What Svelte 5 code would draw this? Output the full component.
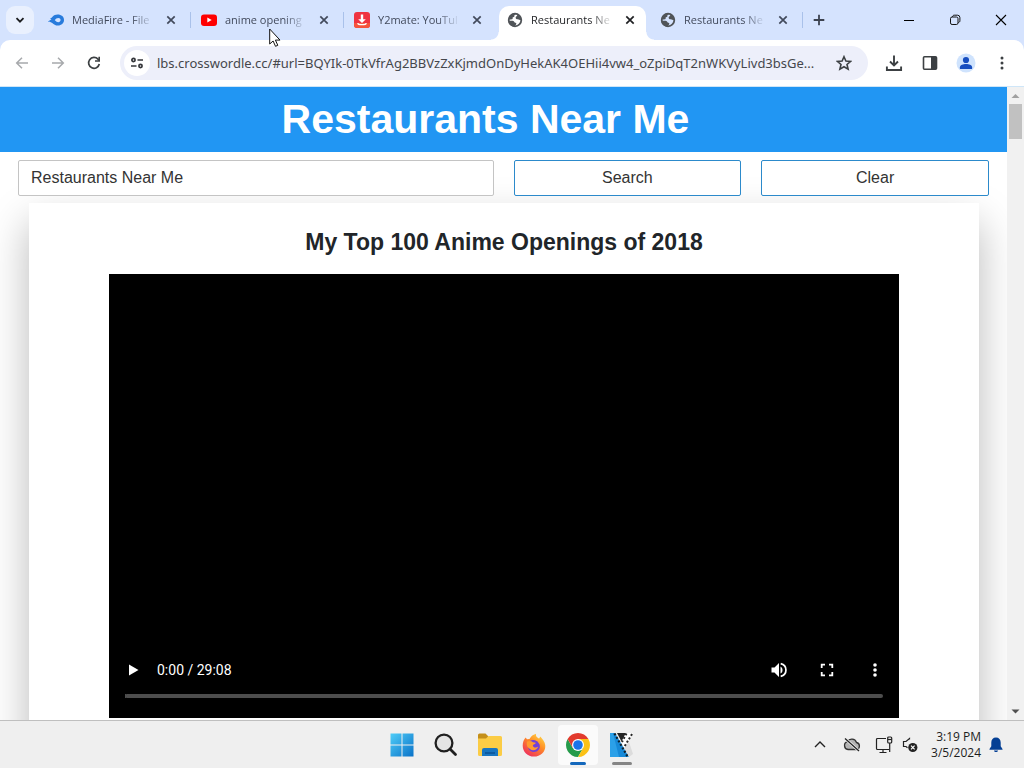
<script>
  const tabs = [
    { title: 'MediaFire - File', icon: 'mediafire' },
    { title: 'anime opening', icon: 'youtube' },
    { title: 'Y2mate: YouTul', icon: 'y2mate' },
    { title: 'Restaurants Ne', icon: 'globe', active: true },
    { title: 'Restaurants Ne', icon: 'globe' }
  ];
  const apps = ['Start', 'Search', 'File Explorer', 'Firefox', 'Chrome', 'Video Editor'];
  let query = $state('Restaurants Near Me');
  let position = $state(0);
</script>

<div class="screen">
  <nav class="tabstrip" aria-label="Tabs">
    <button class="tabsearch" aria-label="Search tabs">
      <svg width="10" height="10" viewBox="0 0 10 10"><path d="M1.500 3.200 5 6.700l3.500-3.500" fill="none" stroke="#1b1c1f" stroke-width="1.800" /></svg>
    </button>
    <div class="tabs">
      {#each tabs as tab, i}
        <div class="tab" class:active={tab.active} class:line={i !== 2 && !tab.active}>
          <svg class="favicon" width="16" height="16" viewBox="0 0 16 16" aria-hidden="true">
            {#if tab.icon === 'mediafire'}
              <path d="M0 9.500 3.500 7.200 2 6.800C4.500 6 5 2.600 9.600 2.600c3.900 0 6.400 2.300 6.400 5.400s-2.600 5.500-6 5.500c-2.800 0-4-1.200-5.800-2.600C3 10 1.500 10.200 0 9.500Z" fill="#287bdc" />
              <path d="M6.800 8.200c.9-1.500 2-2.200 3.500-2.200 1.400 0 2.300.9 2.300 2.100s-1 2.100-2.300 2.100c-1.400 0-2-.9-3.500-2Z" fill="#d5e3fe" />
            {:else if tab.icon === 'youtube'}
              <rect y="2.400" width="16" height="11.500" rx="3" fill="#f00" />
              <path d="m6.300 5.600 4.400 2.500-4.400 2.500Z" fill="#fff" />
            {:else if tab.icon === 'y2mate'}
              <rect width="16" height="16" rx="3" fill="#ef3340" />
              <path d="M0 11h16v2a3 3 0 0 1-3 3H3a3 3 0 0 1-3-3Z" fill="#f5543c" />
              <path d="M6.800 2.500h2.400v4.700h2.600L8 11 4.200 7.200h2.600Z" fill="#fff" />
              <path d="M3.600 11.200c.6 2 8.200 2 8.800 0" fill="none" stroke="#fff" stroke-width="1.300" />
            {:else}
              <circle cx="8" cy="8" r="6.300" fill={tab.active ? '#fff' : '#d5e3fe'} stroke="#505458" stroke-width="1.800" />
              <path d="M1.300 7.400C2 3.600 4.800 1.200 8.800 1.300c.6 1-.6 1.500-1.300 1.700-.2 1 .2 1.700-.8 2-.9.200-1.100.4-1 1.200.1.800-.8 1.200-1.600 1.200Z" fill="#505458" />
              <path d="M10.400 2.300c2 .7 3.700 2.200 4.300 5.200-1 .9-1.700.6-2.400.2-.9-.5-2.200 0-3-.7-1-.9-.8-2.300.3-2.800.8-.4.6-1 .8-1.900Z" fill="#505458" />
              <path d="M1.400 8.700c1.600.2 3.600-.4 5 .4 1 .6.8 1.500 2 1.700 1 .2 1.200.9.700 1.600-.7.900-1 1.200-1.100 2.400-3.700 0-6.300-2.700-6.600-6.100Z" fill="#505458" />
            {/if}
          </svg>
          <a class="title" href="#tab">{tab.title}</a>
          <button class="close" aria-label="Close tab">
            <svg width="10" height="10" viewBox="0 0 10 10"><path d="m1.300 1.300 7.400 7.400m0-7.400-7.400 7.400" stroke="currentColor" stroke-width="1.700" /></svg>
          </button>
        </div>
      {/each}
    </div>
    <button class="newtab" aria-label="New tab">
      <svg width="12" height="12" viewBox="0 0 12 12"><path d="M6 .7v10.600M.7 6h10.600" stroke="#3c4250" stroke-width="1.800" /></svg>
    </button>
    <div class="window">
      <button aria-label="Minimize"><svg width="12" height="12" viewBox="0 0 12 12"><path d="M1 6.500h10" stroke="#000" /></svg></button>
      <button aria-label="Restore"><svg width="12" height="12" viewBox="0 0 12 12" fill="none" stroke="#111"><rect x="1.500" y="3" width="7.500" height="7.500" rx="1.600" /><path d="M3.500 3c0-1 .7-1.800 1.700-1.800h3.300A2.400 2.400 0 0 1 10.900 3.600v3.200c0 1-.7 1.700-1.700 1.700" /></svg></button>
      <button aria-label="Close"><svg width="12" height="12" viewBox="0 0 12 12"><path d="m1 1 10 10M11 1 1 11" stroke="#000" stroke-width="1.100" /></svg></button>
    </div>
  </nav>

  <div class="toolbar">
    <button class="tool" aria-label="Back"><svg width="16" height="16" viewBox="0 0 16 16"><path d="M14 8H3m5-5.300L2.700 8 8 13.300" fill="none" stroke="#a7a9ac" stroke-width="1.500" /></svg></button>
    <button class="tool" aria-label="Forward"><svg width="16" height="16" viewBox="0 0 16 16"><path d="M2 8h11M8 2.700 13.300 8 8 13.300" fill="none" stroke="#a7a9ac" stroke-width="1.500" /></svg></button>
    <button class="tool" aria-label="Reload"><svg width="16" height="16" viewBox="0 0 16 16"><path d="M13.300 9A5.400 5.400 0 1 1 12 4.200l1 1" fill="none" stroke="#3c4043" stroke-width="1.700" /><path d="M14 1.800v5H9V5.300h3.400V1.800Z" fill="#3c4043" /></svg></button>
    <div class="omnibox">
      <button class="site" aria-label="View site information">
        <svg width="14" height="14" viewBox="0 0 14 14" fill="none" stroke="#34363a" stroke-width="1.700"><circle cx="3.500" cy="4" r="1.600" /><path d="M7.500 4H13M1 10h5.500" /><circle cx="10.500" cy="10" r="1.600" /></svg>
      </button>
      <input class="url" aria-label="Address" value="lbs.crosswordle.cc/#url=BQYIk-0TkVfrAg2BBVzZxKjmdOnDyHekAK4OEHii4vw4_oZpiDqT2nWKVyLivd3bsGe..." />
      <button class="star" aria-label="Bookmark this tab"><svg width="16" height="16" viewBox="0 0 16 16"><path d="m8 1.700 1.900 4.300 4.700.4-3.600 3.100 1.100 4.600L8 11.700l-4.100 2.400L5 9.500 1.400 6.400l4.700-.4Z" fill="none" stroke="#3c4043" stroke-width="1.600" /></svg></button>
    </div>
    <button class="tool" aria-label="Downloads"><svg width="18" height="18" viewBox="0 0 18 18" fill="none" stroke="#3c4043" stroke-width="1.900"><path d="M9 1.500v10M5 7.500l4 4 4-4M1.900 12.500V16h14.200v-3.500" /></svg></button>
    <button class="tool" aria-label="Side panel"><svg width="16" height="16" viewBox="0 0 16 16"><rect x="1.500" y="1.800" width="13" height="12.400" rx="1" fill="none" stroke="#3c4043" stroke-width="1.600" /><path d="M9 2h5.500v12H9Z" fill="#3c4043" /></svg></button>
    <button class="tool" aria-label="Profile"><svg width="20" height="20" viewBox="0 0 20 20"><circle cx="10" cy="10" r="9.500" fill="#cfe3fd" /><circle cx="10" cy="7" r="3.100" fill="#174ec0" /><path d="M3.900 16v-1.700c0-2 3.200-3.200 6.100-3.200s6.100 1.200 6.100 3.200V16Z" fill="#174ec0" /></svg></button>
    <button class="tool" aria-label="Menu"><svg width="16" height="16" viewBox="0 0 16 16" fill="#3c4043"><circle cx="8" cy="3" r="1.500" /><circle cx="8" cy="8" r="1.500" /><circle cx="8" cy="13" r="1.500" /></svg></button>
  </div>

  <div class="view">
    <main class="page">
      <header><h1>Restaurants Near Me</h1></header>
      <form class="search" onsubmit={(e) => e.preventDefault()}>
        <input type="text" aria-label="Search text" bind:value={query} />
        <button type="submit">Search</button>
        <button type="button" onclick={() => (query = '')}>Clear</button>
      </form>
      <article>
        <h2>My Top 100 Anime Openings of 2018</h2>
        <div class="player">
          <div class="controls">
            <button aria-label="Play"><svg width="18" height="18" viewBox="0 0 18 18"><path d="m5 3.500 9.500 5.500L5 14.500Z" fill="#fff" /></svg></button>
            <span class="time">0:00 / 29:08</span>
            <button aria-label="Mute"><svg width="18" height="18" viewBox="0 0 18 18"><path d="M1.500 6.500h3L9 2v14l-4.500-4.500h-3Z" fill="#fff" /><path d="M10.500 5.400c2.700 1.300 2.700 5.900 0 7.200Z" fill="#fff" /><path d="M10.700 2.700c7 1.700 7 10.900 0 12.600" fill="none" stroke="#fff" stroke-width="1.700" /></svg></button>
            <button aria-label="Full screen"><svg width="18" height="18" viewBox="0 0 18 18"><path d="M3.700 7V3.700H7m4 0h3.300V7m0 4v3.300H11m-4 0H3.700V11" fill="none" stroke="#fff" stroke-width="1.800" /></svg></button>
            <button aria-label="More options"><svg width="18" height="18" viewBox="0 0 18 18" fill="#fff"><circle cx="9" cy="4" r="1.800" /><circle cx="9" cy="9" r="1.800" /><circle cx="9" cy="14" r="1.800" /></svg></button>
          </div>
          <input class="seek" type="range" min="0" max="1748" aria-label="Seek" bind:value={position} />
        </div>
      </article>
    </main>
    <div class="scrollbar" aria-hidden="true">
      <svg width="17" height="17" viewBox="0 0 17 17"><path d="m4.500 11 4-4 4 4Z" fill="#a0a0a0" /></svg>
      <div class="thumb"></div>
      <svg width="17" height="17" viewBox="0 0 17 17"><path d="m4.500 6.500 4 4 4-4Z" fill="#505050" /></svg>
    </div>
  </div>

  <footer class="taskbar">
    <div class="apps">
      {#each apps as app}
        <button class="app" class:current={app === 'Chrome'} class:open={app === 'Video Editor'} aria-label={app}>
          <svg width="24" height="24" viewBox="0 0 24 24">
            {#if app === 'Start'}
              <defs><linearGradient id="win" x1="0" y1="0" x2="1" y2="1"><stop offset="0" stop-color="#4fcdf8" /><stop offset="1" stop-color="#0a72c8" /></linearGradient></defs>
              <path d="M.5.500h11v11H.5Zm12 0h11v11h-11Zm-12 12h11v11H.5Zm12 0h11v11h-11Z" fill="url(#win)" />
            {:else if app === 'Search'}
              <circle cx="10" cy="10" r="8.400" fill="#e4e4e4" stroke="#202020" stroke-width="2.300" />
              <path d="m16 16 5.500 5.500" stroke="#202020" stroke-width="2.800" stroke-linecap="round" />
            {:else if app === 'File Explorer'}
              <path d="M0 2a1.500 1.500 0 0 1 1.500-1.500h6L10 3v5H0Z" fill="#c48f1a" />
              <path d="M0 5.500h8L10.500 3h12A1.500 1.500 0 0 1 24 4.500v17a1.500 1.500 0 0 1-1.500 1.500h-21A1.500 1.500 0 0 1 0 21.500Z" fill="#fbcc45" />
              <path d="M4 23v-6a2 2 0 0 1 2-2h12a2 2 0 0 1 2 2v6Z" fill="#1875c0" />
              <path d="M7 19h10v2H7Z" fill="#0c5aa0" />
            {:else if app === 'Firefox'}
              <defs><linearGradient id="fox" x1="0.900" y1="0" x2="0.200" y2="1"><stop offset="0" stop-color="#ffe14a" /><stop offset=".45" stop-color="#ff8b26" /><stop offset="1" stop-color="#ed2a62" /></linearGradient></defs>
              <path d="M3.600 4.500 5 6.200l2.500-.1c2-3.700 4.200-4.400 6.600-5.300-.7 2.800 1.200 3.700 3 4.800l1.300-2.200c1 1.800 4.600 4.400 4.900 9.300C23.600 19 18.400 23.600 12 23.600S.8 19 .7 12.700C.7 9.500 1.800 6.400 3.600 4.500Z" fill="url(#fox)" />
              <path d="M8 8c3-2.500 8-.5 9.500 3.500 1.500 4-2 7.500-5.500 7.500s-6-2.500-6-5.500Z" fill="#7140d8" />
              <path d="M5 8.500c2.500-1 4.500-.6 6 .7l2.800.6c-.2 1.700-2.800 1.300-3 2.700 0 2 3.400 2.800 5.500 1.100-1 3.500-5.600 4.800-8.300 2.400C4.800 14.200 4.400 11.500 5 8.500Z" fill="#ff9b2f" />
            {:else if app === 'Chrome'}
              <path d="M6.800 15 1.610 6A12 12 0 0 0 12 24l5.200-9Z" fill="#269b4b" />
              <path d="M12 6h10.390A12 12 0 0 1 12 24l5.200-9Z" fill="#fbc116" />
              <path d="M1.610 6A12 12 0 0 1 22.390 6H12l-5.200 9Z" fill="#e23b2e" />
              <circle cx="12" cy="12" r="6" fill="#fff" />
              <circle cx="12" cy="12" r="4.800" fill="#1a73e8" />
            {:else}
              <path d="M0 0h5l14 24H0Z" fill="#1689d8" />
              <path d="M0 0h3l6 24H0Z" fill="#35aaf0" opacity=".7" />
              <path d="m19 24-5-9 5-6 4 12Z" fill="#dcdcdc" />
              <path d="M7 0h9l-4.500 8.500Z" fill="#262626" />
              <path d="M16 0h7l-8.500 14.500-3-5Z" fill="#fff" />
              <path d="m4.500.5 13 23" stroke="#10212c" stroke-width="2.200" stroke-dasharray="2 2" />
              <path d="m16.500.5-4.500 8.500M22 1l-7.500 12.500" stroke="#262626" stroke-width="2" stroke-dasharray="2 2" />
            {/if}
          </svg>
        </button>
      {/each}
    </div>
    <div class="tray">
      <button aria-label="Show hidden icons"><svg width="18" height="18" viewBox="0 0 18 18"><path d="m4 11 5-5 5 5" fill="none" stroke="#222" stroke-width="1.400" /></svg></button>
      <button class="cloud" aria-label="OneDrive"><svg width="18" height="18" viewBox="0 0 18 18"><path d="M5 13.500a4 4 0 0 1-.6-7.800A5 5 0 0 1 13.500 6.500a3.600 3.600 0 0 1 .3 7Z" fill="#b4b4b4" stroke="#333" stroke-width="1.300" /><path d="m2 2.500 14 12.500" stroke="#efefef" stroke-width="3" /><path d="m2 2.500 14 12.500" stroke="#222" stroke-width="1.300" /></svg></button>
      <button aria-label="Network"><svg width="18" height="18" viewBox="0 0 18 18" fill="none" stroke="#222" stroke-width="1.200"><path d="M11 2.500H2.500a1 1 0 0 0-1 1v9a1 1 0 0 0 1 1H14M8 13.500v3M4.500 16.500h7M14.700 7v9" /><rect x="12.700" y="1" width="4" height="6" rx="1" /><path d="M13 3.500h3.500" /></svg></button>
      <button aria-label="Volume"><svg width="18" height="18" viewBox="0 0 18 18"><path d="M8.500 3.500v-1L5 5.500H2.500v5H5l1.500 1.300" fill="none" stroke="#222" stroke-width="1.200" /><circle cx="11.800" cy="11.500" r="4.600" fill="#222" /><path d="m10 9.700 3.600 3.600m0-3.600L10 13.300" stroke="#fff" stroke-width="1.200" /></svg></button>
      <div class="clock"><time>3:19 PM</time><time>3/5/2024</time></div>
      <button class="bell" aria-label="Notifications"><svg width="14" height="16" viewBox="0 0 14 16"><path d="M7 .5c3 0 4.700 2.100 4.700 5v3.800L13.500 12v.7H.5V12l1.800-2.700V5.500C2.300 2.600 4 .5 7 .5ZM5 13.500h4c-.2 2-3.800 2-4 0Z" fill="#043f94" /></svg></button>
    </div>
  </footer>

  <svg class="cursor" width="13" height="21" viewBox="0 0 13 21" aria-hidden="true"><path d="M.7 1v15l3.400-3 2.400 5.300 2.300-1-2.400-5.200h4.600Z" fill="#fff" stroke="#111" /></svg>
</div>

<style>
  :global(body) { margin: 0; }
  .screen {
    position: relative;
    display: flex;
    flex-direction: column;
    height: 100vh;
    overflow: hidden;
    font-family: "Open Sans", "Segoe UI", sans-serif;
    background: #fff;
  }
  button { display: flex; align-items: center; justify-content: center; padding: 0; border: 0; background: none; color: inherit; flex: none; }
  svg { display: block; flex: none; }
  .tabstrip { position: relative; z-index: 1; display: flex; align-items: center; height: 40px; flex: none; background: #d5e3fe; }
  .tabsearch { width: 28px; height: 28px; margin: 0 5px 0 6px; border-radius: 9px; background: #e9f0fe; }
  .tabs { display: flex; align-self: stretch; align-items: flex-end; flex: 0 1 765px; min-width: 0; }
  .tab {
    position: relative;
    display: flex;
    align-items: center;
    flex: 1 1 0;
    min-width: 0;
    height: 34px;
    padding: 0 13px 6px 9px;
    box-sizing: border-box;
    color: #424a5c;
  }
  .tab.active { color: #1f2023; }
  .tab.active::before { content: ""; position: absolute; inset: 0 5px 0 1px; border-radius: 10px 10px 0 0; background: #fff; }
  .tab.active::after {
    content: "";
    position: absolute;
    right: -3px;
    bottom: 0;
    left: -7px;
    height: 8px;
    background:
      radial-gradient(circle at 0 0, #d5e3fe 7px, #fff 8px) left / 8px 8px no-repeat,
      radial-gradient(circle at 100% 0, #d5e3fe 7px, #fff 8px) right / 8px 8px no-repeat;
  }
  .tab.line { background: linear-gradient(#a9c1ea, #a9c1ea) right 1px top 6px / 1px 16px no-repeat; }
  .favicon, .title, .close { position: relative; z-index: 1; }
  .title {
    flex: 1;
    min-width: 0;
    margin: 0 9px 0 8px;
    overflow: hidden;
    white-space: nowrap;
    font-size: 11px;
    line-height: 20px;
    color: inherit;
    text-decoration: none;
    mask-image: linear-gradient(90deg, #000 72%, transparent);
  }
  .close { width: 16px; height: 16px; }
  .newtab { width: 28px; height: 28px; margin-left: 1px; }
  .window { display: flex; align-self: stretch; margin-left: auto; }
  .window button { width: 46px; }

  .toolbar { display: flex; align-items: center; height: 46px; flex: none; padding: 0 4px; border-bottom: 1px solid #cfe6f8; border-radius: 10px 10px 0 0; background: #fff; box-shadow: 0 -10px 0 #d5e3fe; }
  .tool { width: 36px; height: 34px; }
  .omnibox { display: flex; align-items: center; flex: 1; min-width: 0; height: 34px; margin: 0 8px; padding: 0 10px 0 4px; border-radius: 17px; background: #edeffa; }
  .site { width: 26px; height: 26px; border-radius: 50%; background: #fff; }
  .url { flex: 1; min-width: 0; margin: 0 2px 0 7px; padding: 0; border: 0; background: none; font: 13px/20px "Noto Sans", "Segoe UI", sans-serif; color: #45474c; outline: 0; }
  .star { width: 28px; height: 28px; }

  .view { display: flex; flex: 1; min-height: 0; }
  .page { flex: 1; min-width: 0; overflow: hidden; font-family: "Liberation Sans", Arial, sans-serif; color: #212529; }
  header { padding-right: 36px; background: #2196f3; }
  h1 { margin: 0; font-size: 41px; line-height: 65px; text-align: center; color: #fff; }
  .search { display: grid; grid-template-columns: repeat(4, 1fr); gap: 20px; padding: 8px 18px 7px; }
  .search input, .search button { box-sizing: border-box; height: 36px; border: 1px solid #2c8acb; border-radius: 2px; background: #fff; font: 16px/24px "Liberation Sans", Arial, sans-serif; color: #333; }
  .search input { grid-column: span 2; min-width: 0; padding: 0 12px; border-color: #c4c4c4; }
  article { margin: 0 28px 0 29px; padding: 23px 80px 60px; background: #fff; box-shadow: 0 20px 40px rgba(0, 0, 0, 0.28); }
  h2 { margin: 0 0 16px; font-size: 23px; line-height: 32px; text-align: center; }
  .player { display: flex; flex-direction: column; justify-content: flex-end; box-sizing: border-box; aspect-ratio: 16 / 9; padding: 0 16px 20px; background: #000; }
  .controls { display: flex; align-items: center; height: 48px; margin: 0 -16px; color: #fff; }
  .controls button { width: 48px; height: 48px; }
  .time { flex: 1; font: 14px/20px Roboto, sans-serif; }
  .seek { appearance: none; width: 100%; height: 4px; margin: 0; border-radius: 2px; background: #4d4d4d; }
  .seek::-webkit-slider-thumb { appearance: none; width: 1px; height: 4px; background: #4d4d4d; }
  .scrollbar { width: 17px; flex: none; background: #f1f1f1; display: flex; flex-direction: column; }
  .thumb { height: 35px; margin: 0 2px auto; background: #c1c1c1; }

  .taskbar { display: grid; grid-template-columns: 1fr auto 1fr; align-items: center; height: 47px; flex: none; border-top: 1px solid #bfbfbf; background: #efefef; color: #1d1d1d; }
  .apps { grid-column: 2; display: flex; }
  .app { position: relative; width: 40px; height: 40px; margin: 0 2px; border-radius: 4px; }
  .current { background: #fbfbfb; }
  .current::after, .open::after { content: ""; position: absolute; bottom: 0; left: 12px; width: 16px; height: 3px; border-radius: 2px; background: #1468bc; }
  .open::after { left: 10px; width: 20px; background: #858585; }
  .tray { display: flex; align-items: center; justify-self: end; padding-right: 21px; }
  .tray button { width: 26px; height: 32px; }
  .tray .cloud { margin: 0 6px; }
  .clock { display: flex; flex-direction: column; align-items: flex-end; width: 58px; font: 12px/16px "Open Sans", "Segoe UI", sans-serif; }
  .tray .bell { width: 14px; margin-left: 8px; }
  .cursor { position: absolute; top: 28px; left: 269px; z-index: 2; }
</style>
